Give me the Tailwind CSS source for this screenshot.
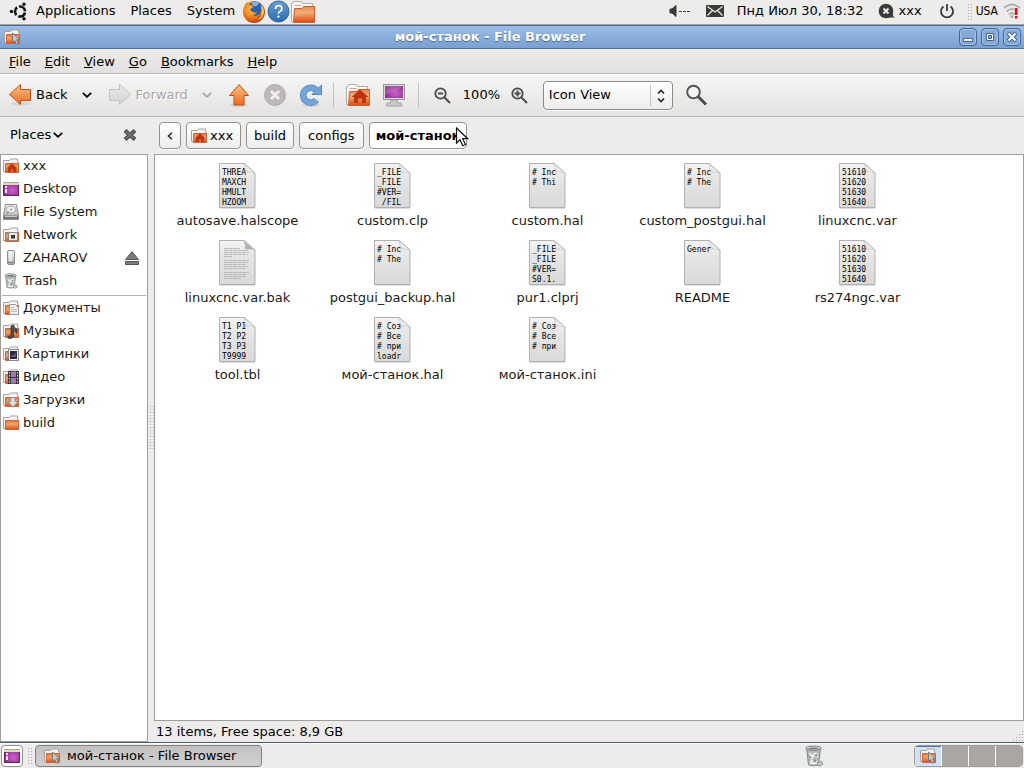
<!DOCTYPE html>
<html lang="en">
<head>
<meta charset="UTF-8">
<meta name="viewport" content="width=device-width, initial-scale=1.0">
<title>мой-станок - File Browser</title>
<script src="https://cdn.jsdelivr.net/npm/@tailwindcss/browser@4"></script>
</head>
<body class="flex h-screen flex-col overflow-hidden bg-[#edeceb] font-['DejaVu_Sans',sans-serif] text-[13px] leading-4 text-black">

<!-- Shared icon symbols -->
<svg class="absolute h-0 w-0" aria-hidden="true">
    <defs>
        <linearGradient id="g-orange" x1="0" y1="0" x2="0" y2="1"><stop offset="0" stop-color="#dd7a42"/><stop offset=".4" stop-color="#f3a468"/><stop offset="1" stop-color="#dc4a14"/></linearGradient>
        <linearGradient id="g-arrow" x1="0" y1="0" x2="0" y2="1"><stop offset="0" stop-color="#fbc58a"/><stop offset="1" stop-color="#ee6a20"/></linearGradient>
        <linearGradient id="g-arrow-off" x1="0" y1="0" x2="0" y2="1"><stop offset="0" stop-color="#ebebea"/><stop offset="1" stop-color="#d4d3d2"/></linearGradient>
        <linearGradient id="g-paper" x1="0" y1="0" x2="0" y2="1"><stop offset="0" stop-color="#f4f4f4"/><stop offset=".35" stop-color="#e6e6e6"/><stop offset="1" stop-color="#d9d9d9"/></linearGradient>
        <linearGradient id="g-curl" x1="0" y1="1" x2="1" y2="0"><stop offset="0" stop-color="#c4c4c4"/><stop offset=".5" stop-color="#f6f6f6"/><stop offset="1" stop-color="#ffffff"/></linearGradient>
        <linearGradient id="g-metal" x1="0" y1="0" x2="0" y2="1"><stop offset="0" stop-color="#f4f4f4"/><stop offset="1" stop-color="#a9a9a9"/></linearGradient>
        <linearGradient id="g-blue" x1="0" y1="0" x2="0" y2="1"><stop offset="0" stop-color="#6d9fd0"/><stop offset="1" stop-color="#2a6db0"/></linearGradient>
        <radialGradient id="g-purple" cx=".6" cy=".6" r=".8"><stop offset="0" stop-color="#cf5fc9"/><stop offset="1" stop-color="#7d2181"/></radialGradient>
        <radialGradient id="g-fox" cx=".4" cy=".35" r=".7"><stop offset="0" stop-color="#fdc33c"/><stop offset=".6" stop-color="#ee7a1c"/><stop offset="1" stop-color="#b8360d"/></radialGradient>
    </defs>

    <symbol id="folder" viewBox="0 0 16 16">
        <path d="M.5 13.500v-11h6l1-1.500h7v2.500h.5v10z" fill="#f6f5f4" stroke="#a5a29e"/>
        <path d="M2.500 14.500v-9h13v9z" fill="url(#g-orange)" stroke="#cf6236"/>
    </symbol>
    <symbol id="folder-home" viewBox="0 0 16 16">
        <use href="#folder" width="16" height="16"/>
        <path d="M9 5.500l5.500 5H13v3.500h-2.700v-2.500H7.700V14H5v-3.500H3.500z" fill="#bd3412"/>
    </symbol>
    <!-- 24px folders for the panel and the toolbar -->
    <symbol id="folder-large" viewBox="0 0 24 24">
        <path d="M.5 21.500v-18h1l1-2h8l1 2h10v18z" fill="#f8f7f6" stroke="#b1aeaa"/>
        <path d="M3.500 5.500h7" stroke="#e7a27c"/>
        <path d="M2.500 22.500l1-14h7.500l1.500-2h11v16z" fill="url(#g-orange)" stroke="#cf5f2c"/>
        <path d="M12 7h11v6q-9 0-19 5l.5-9h6.500z" fill="#fff" opacity=".12"/>
    </symbol>
    <symbol id="folder-home-large" viewBox="0 0 24 24">
        <use href="#folder-large" width="24" height="24"/>
        <path d="M14 6.500l8.500 7.500h-2.500v6h-4v-4.500h-4V20H8v-6H5.500z" fill="#bd3412"/>
    </symbol>
    <symbol id="folder-cursor" viewBox="0 0 16 16">
        <use href="#folder" width="16" height="16"/>
        <path d="M8.500 4v9.500l2.200-2 1.600 3.800 2-.9-1.600-3.600h3z" fill="#c9c9c9" stroke="#6f6f6f" stroke-width=".9"/>
    </symbol>
    <symbol id="desktop" viewBox="0 0 16 16">
        <rect x=".5" y="1.500" width="15" height="13" fill="url(#g-purple)" stroke="#63215f"/>
        <path d="M0 1h16v3H0z" fill="#dcd9c4"/><path d="M0 1h16v1H0z" fill="#aaa78f"/>
        <path d="M2 5h2v2H2zM2 8h2v4H2z" fill="#f1e5f1"/>
    </symbol>
    <symbol id="drive" viewBox="0 0 16 16">
        <path d="M2.500.5h11l2 11v4H.5v-4z" fill="url(#g-metal)" stroke="#8b8b8b"/>
        <ellipse cx="8" cy="5.500" rx="4.500" ry="3.500" fill="#ededed" stroke="#aaa"/><circle cx="8" cy="5.500" r="1" fill="#999"/>
        <path d="M1 11.500h14v3.500H1z" fill="#777"/><path d="M2 12h12v1H2z" fill="#c9c9c9"/>
        <path d="M3 9l3-2v1.500L4 11z" fill="#999"/>
    </symbol>
    <symbol id="network" viewBox="0 0 16 16">
        <use href="#folder" width="16" height="16"/>
        <path d="M5.500 5.500h9v8h-9z" fill="#eceae6" stroke="#8b8883"/><path d="M8 8h4v3.500H8z" fill="#333"/>
    </symbol>
    <symbol id="usb" viewBox="0 0 16 16">
        <rect x="4.500" y=".5" width="7" height="14" rx="1.500" fill="url(#g-metal)" stroke="#909090"/>
        <path d="M6 2h3v9H6z" fill="#fff" opacity=".6"/><path d="M5 12.500h6" stroke="#858585"/>
    </symbol>
    <symbol id="trash" viewBox="0 0 20 24">
        <path d="M2 4.500l2 17q5.500 2.500 11 0l2-17z" fill="#b4bab7" stroke="#7b817e"/>
        <path d="M5 8l3 3 3-3 4 2-1 4-4-1-3 3-2-2zM6 17l3-1 2 3 3-2v4H6z" fill="#eef0ef"/>
        <path d="M4 10l4 4-3 1zM10 10l2 4 3-4M8 18l3-3 2 4" fill="#7f8582" opacity=".75"/>
        <ellipse cx="9.500" cy="3.500" rx="8.500" ry="2.300" fill="#dfe2e0" stroke="#6e7471"/><ellipse cx="9.500" cy="3.800" rx="5.500" ry="1" fill="#777d7a"/>
        <path d="M14 19l4-1 1.500 3-3 2-3-1z" fill="#ccc" stroke="#808684"/>
    </symbol>
    <symbol id="documents" viewBox="0 0 16 16">
        <use href="#folder" width="16" height="16"/>
        <path d="M6.500 4.500h6l3 3v7h-9z" fill="#f0f0ef" stroke="#999"/><path d="M8 7.500h3M8 9.500h6M8 11.500h6" stroke="#bbb"/>
    </symbol>
    <symbol id="music" viewBox="0 0 16 16">
        <use href="#folder" width="16" height="16"/>
        <path d="M8 13V3l2.500-1q.5 3 3.500 4.500.5 2-.5 4Q13 8 10.500 7.500V13q-.5 2.500-3.500 2.500-2 0-2-1.500t3-1z" fill="#555" stroke="#222" stroke-width=".7"/>
    </symbol>
    <symbol id="pictures" viewBox="0 0 16 16">
        <use href="#folder" width="16" height="16"/>
        <path d="M5.500 3.500h10v11h-10z" fill="#f5f5f5" stroke="#888"/><path d="M7 5h7v8H7z" fill="#30243b"/><path d="M8 10l5-3v4H8z" fill="#68507c"/>
    </symbol>
    <symbol id="video" viewBox="0 0 16 16">
        <use href="#folder" width="16" height="16"/>
        <path d="M5 2h11v13H5z" fill="#3c3840"/><path d="M8 2.500h5v5.500H8zM8 9h5v5.500H8z" fill="#a078b4"/>
        <path d="M6.500 3v12M14.500 3v12" stroke="#e4e0e6" stroke-dasharray="1.500 1.500"/>
    </symbol>
    <symbol id="downloads" viewBox="0 0 16 16">
        <use href="#folder" width="16" height="16"/>
        <path d="M7.500 5.500h5v4h3L10 15.300 4.500 9.500h3z" fill="#d8d8d8" stroke="#8a8a8a"/>
    </symbol>
    <symbol id="chevron" viewBox="0 0 10 6">
        <path d="M.8.800L5 4.800 9.200.8" fill="none" stroke="currentColor" stroke-width="1.800"/>
    </symbol>
</svg>

<!-- Top panel -->
<header class="flex h-[25px] shrink-0 items-center border-b border-[#a5a39c] pr-[3px] pb-0.5 pl-[9px]">
    <svg class="h-5 w-5" viewBox="0 0 20 20" aria-hidden="true">
        <circle cx="11" cy="10.500" r="5" fill="none" stroke="#111" stroke-width="2.600" stroke-dasharray="8.470 2" stroke-dashoffset="-1"/>
        <circle cx="2.500" cy="10.500" r="1.700" fill="#111"/><circle cx="15" cy="3.300" r="1.700" fill="#111"/><circle cx="15" cy="17.700" r="1.700" fill="#111"/>
    </svg>
    <nav class="ml-[7px] flex gap-[15px]">
        <a href="#">Applications</a>
        <a href="#">Places</a>
        <a href="#">System</a>
    </nav>
    <div class="ml-[7px] flex items-center gap-px pt-px">
        <a href="#" aria-label="Firefox">
            <svg class="h-6 w-6" viewBox="0 0 24 24">
                <circle cx="12" cy="12" r="11" fill="url(#g-fox)"/>
                <circle cx="13" cy="9" r="7.500" fill="#2c60aa"/><path d="M9 3q5-2.500 8 0l-2 3-3 .5z" fill="#7db3e2"/>
                <path d="M2 7q1-4 4-5 0 2 2 3 3 0 3 1.500T8 9q0 2 3 3 2 1 4 0-1 3-4 3 3 2 6-.5Q20 12 19.500 6q3 3 2.500 8-2 8-10 8.500Q4 22 2 15 .5 11 2 7z" fill="url(#g-fox)"/>
                <path d="M19 5q4 4 2.500 9-1.500 5-6.500 7 4-3 4.500-7 .5-4-.5-9z" fill="#fbd34b"/>
            </svg>
        </a>
        <a href="#" aria-label="Help">
            <svg class="h-[23px] w-[23px]" viewBox="0 0 23 23">
                <circle cx="11.500" cy="11.500" r="10.500" fill="url(#g-blue)" stroke="#2e659d"/>
                <path d="M8.500 9q0-3.300 3.200-3.300T14.800 8.700q0 1.600-1.700 2.600t-1.600 2.400" fill="none" stroke="#fff" stroke-width="1.700"/><circle cx="11.500" cy="16.600" r="1.200" fill="#fff"/>
            </svg>
        </a>
        <a href="#" aria-label="Home folder"><svg class="h-6 w-6"><use href="#folder-large"/></svg></a>
    </div>

    <div class="ml-auto flex items-center">
        <svg class="h-4 w-[22px]" viewBox="0 0 22 16" aria-label="Volume"><path d="M1 6h2l4-3.500v11L3 10H1z" fill="#3c3b37" stroke="#3c3b37"/><path d="M10 8.500h11" stroke="#3c3b37" stroke-dasharray="3 1"/></svg>
        <svg class="ml-[15px] h-3 w-[18px]" viewBox="0 0 18 12" aria-label="Mail"><rect width="18" height="12" rx="1" fill="#3c3b37"/><path d="M1.500 1.500L9 7l7.500-5.500M1.500 10.500l5-5M16.500 10.500l-5-5" fill="none" stroke="#edeceb" stroke-width="1.200"/></svg>
        <time class="ml-[13px]">Пнд Июл 30, 18:32</time>
        <svg class="ml-[14px] h-[18px] w-[18px]" viewBox="0 0 18 18" aria-hidden="true"><circle cx="8" cy="9" r="7.300" fill="#3c3b37"/><path d="M10 10h5v4l2 1.500H8z" fill="#3c3b37"/><path d="M5.500 6.500l5 5M10.500 6.500l-5 5" stroke="#edeceb" stroke-width="2"/></svg>
        <span class="ml-[3px]">xxx</span>
        <svg class="ml-[17px] h-4 w-4" viewBox="0 0 16 16" aria-label="Power"><path d="M4.500 3.500a6 6 0 1 0 7 0" fill="none" stroke="#3c3b37" stroke-width="1.800"/><path d="M8 1v7" stroke="#3c3b37" stroke-width="1.800"/></svg>
        <span class="ml-3 h-[17px] w-[5px] bg-[radial-gradient(#aaa8a4_40%,transparent_45%)] bg-[size:3px_3px]"></span>
        <span class="ml-1 font-['DejaVu_Sans_Condensed','DejaVu_Sans',sans-serif] text-xs">USA</span>
        <svg class="ml-[5px] h-4 w-[18px]" viewBox="0 0 18 16" aria-label="Network">
            <g fill="none" stroke="#b4b2af" stroke-width="1.800"><path d="M1 5q8-7 16 0"/><path d="M3.500 8.500q5.500-5 11 0"/><path d="M6 11.500q3-3 6 0"/></g><circle cx="9" cy="13.500" r="1.500" fill="#aaa"/>
            <path d="M12 5h2.500v7H12zM12 13h2.500v2.500H12z" fill="#dd1414"/>
        </svg>
    </div>
</header>

<!-- Window title bar -->
<div class="flex h-6 shrink-0 items-center border-t border-b border-t-[#4a6c97] border-b-[#4b70a3] bg-linear-to-b from-[#9cbde6] to-[#7aa0d0] px-[3px]">
    <svg class="mx-px h-4 w-4" aria-hidden="true"><use href="#folder-cursor"/></svg>
    <h1 class="flex-1 text-center font-bold text-white [text-shadow:0_1px_1px_#46648c]">мой-станок - File Browser</h1>
    <div class="flex gap-1">
        <button aria-label="Minimize" class="flex h-[18px] w-[18px] items-center justify-center rounded border border-[#42658f] bg-[#86a9d7] inset-shadow-[0_0_0_1px_#a5c2e8]"><svg class="h-3 w-3" viewBox="0 0 12 12"><path d="M1.500 7.500h9v3h-9z" fill="#fff" stroke="#42658f"/></svg></button>
        <button aria-label="Maximize" class="flex h-[18px] w-[18px] items-center justify-center rounded border border-[#42658f] bg-[#86a9d7] inset-shadow-[0_0_0_1px_#a5c2e8]"><svg class="h-3 w-3" viewBox="0 0 12 12"><path d="M2.500 2.500h7v7h-7z" fill="#fff" stroke="#42658f"/><path d="M4.500 4.500h3v3h-3z" fill="#7fa3d2" stroke="#42658f"/></svg></button>
        <button aria-label="Close" class="flex h-[18px] w-[18px] items-center justify-center rounded border border-[#42658f] bg-[#86a9d7] inset-shadow-[0_0_0_1px_#a5c2e8]"><svg class="h-3 w-3" viewBox="0 0 12 12"><path d="M2 2l8 8M10 2l-8 8" stroke="#42658f" stroke-width="4"/><path d="M2.500 2.500l7 7M9.500 2.500l-7 7" stroke="#fff" stroke-width="2"/></svg></button>
    </div>
</div>

<!-- Menu bar -->
<nav class="flex h-[25px] shrink-0 items-center gap-3.5 border-b border-[#bfbebc] bg-linear-to-b from-[#edeceb] to-[#e2e1e0] pt-px pl-[9px]">
    <a href="#"><u>F</u>ile</a>
    <a href="#"><u>E</u>dit</a>
    <a href="#"><u>V</u>iew</a>
    <a href="#"><u>G</u>o</a>
    <a href="#"><u>B</u>ookmarks</a>
    <a href="#"><u>H</u>elp</a>
</nav>

<!-- Toolbar -->
<div class="flex h-[43px] shrink-0 items-center border-t border-b border-t-white border-b-[#bcbab8] bg-linear-to-b from-[#f6f6f5] to-[#e3e2e1] pb-px pl-2">
    <button class="flex items-center gap-1">
        <svg class="h-6 w-6" viewBox="0 0 24 24"><ellipse cx="13" cy="20.500" rx="10" ry="2" fill="#000" opacity=".08"/><path d="M1.500 11.500l11-10v5h10v11h-10v4z" fill="url(#g-arrow)" stroke="#c2501c"/></svg>Back
    </button>
    <button aria-label="Back history" class="ml-3.5"><svg class="h-1.5 w-2.5"><use href="#chevron"/></svg></button>
    <button disabled class="ml-4 flex items-center gap-1 text-[#a9a7a5] [text-shadow:1px_1px_0_#fff]">
        <svg class="h-6 w-6" viewBox="0 0 24 24"><path d="M22.500 11.500l-11-10v5h-10v11h10v4z" fill="url(#g-arrow-off)" stroke="#c3c2c0"/></svg>Forward
    </button>
    <button disabled aria-label="Forward history" class="ml-3.5 text-[#a9a7a5]"><svg class="h-1.5 w-2.5"><use href="#chevron"/></svg></button>
    <button aria-label="Up" class="ml-[15px]">
        <svg class="h-6 w-6" viewBox="0 0 24 24"><ellipse cx="12" cy="22" rx="9" ry="2" fill="#000" opacity=".1"/><path d="M12 1.500l9.500 11h-4.500v9.500H7v-9.500H2.500z" fill="url(#g-arrow)" stroke="#c2501c"/></svg>
    </button>
    <button disabled aria-label="Stop" class="ml-3">
        <svg class="h-6 w-6" viewBox="0 0 24 24"><circle cx="12" cy="12" r="10.500" fill="#bdb9b8" stroke="#b0adab"/><path d="M8 8l8 8M16 8l-8 8" stroke="#f2f1f1" stroke-width="2.800"/></svg>
    </button>
    <button aria-label="Reload" class="ml-3">
        <svg class="h-6 w-6" viewBox="0 0 24 24">
            <ellipse cx="12" cy="22" rx="9" ry="2" fill="#000" opacity=".08"/>
            <path d="M17.500 7.500A7.500 7.500 0 1 0 17.500 17" fill="none" stroke="#5288c2" stroke-width="6.500"/>
            <path d="M22.500 2v9.500h-9.500z" fill="#74a4d8" stroke="#5288c2"/>
            <path d="M17.500 7.500A7.500 7.500 0 1 0 17.500 17" fill="none" stroke="#74a4d8" stroke-width="5"/>
        </svg>
    </button>
    <span class="ml-2.5 h-[25px] w-px bg-[#c4c2c0]"></span>
    <button aria-label="Home" class="ml-3"><svg class="h-6 w-6"><use href="#folder-home-large"/></svg></button>
    <button aria-label="Computer" class="ml-3">
        <svg class="h-6 w-6" viewBox="0 0 24 24"><path d="M9 17h6l1 3h3l1 3H4l1-3h3z" fill="#c9c9c7" stroke="#a3a3a1"/><rect x="1.500" y="1.500" width="21" height="15" fill="#dadad8" stroke="#979795"/><rect x="3" y="3" width="18" height="12" fill="url(#g-purple)"/><path d="M3 3h18q-5 6-18 8z" fill="#fff" opacity=".15"/></svg>
    </button>
    <span class="ml-3 h-[25px] w-px bg-[#c4c2c0]"></span>
    <button aria-label="Zoom out" class="ml-[15px]">
        <svg class="h-[17px] w-[17px]" viewBox="0 0 17 17"><circle cx="6.500" cy="6.500" r="5.200" fill="none" stroke="#4b4b49" stroke-width="1.800"/><path d="M4 6.500h5M10.500 10.500l5.500 5.500" stroke="#4b4b49" stroke-width="2"/></svg>
    </button>
    <button class="mx-3 w-9 text-center">100%</button>
    <button aria-label="Zoom in">
        <svg class="h-[17px] w-[17px]" viewBox="0 0 17 17"><circle cx="6.500" cy="6.500" r="5.200" fill="none" stroke="#4b4b49" stroke-width="1.800"/><path d="M3.500 6.500h6M6.500 3.500v6M10.500 10.500l5.500 5.500" stroke="#4b4b49" stroke-width="2"/></svg>
    </button>
    <div class="relative ml-[15px]">
        <select aria-label="View mode" class="h-[29px] w-[130px] appearance-none rounded border border-[#8c8a87] bg-linear-to-b from-white to-[#eeedec] pl-[5px] shadow-[0_1px_0_#fff]">
            <option>Icon View</option>
            <option>List View</option>
            <option>Compact View</option>
        </select>
        <span class="pointer-events-none absolute inset-y-1 right-[22px] w-px bg-[#c4c2c0]"></span>
        <svg class="pointer-events-none absolute top-2 right-2 h-3.5 w-2" viewBox="0 0 8 14"><path d="M1 4.500L4 1.500l3 3M1 9.500l3 3 3-3" fill="none" stroke="#222" stroke-width="1.600"/></svg>
    </div>
    <button aria-label="Search" class="ml-3">
        <svg class="h-6 w-6" viewBox="0 0 24 24"><circle cx="8.500" cy="9" r="6.300" fill="#f5f5f4" fill-opacity=".6" stroke="#555553" stroke-width="1.900"/><path d="M13 13.500l8 8" stroke="#4b4b49" stroke-width="3"/></svg>
    </button>
</div>

<div class="flex min-h-0 flex-1">
    <!-- Side pane -->
    <aside class="flex w-[148px] shrink-0 flex-col">
        <div class="flex h-[37px] shrink-0 items-center pr-[11px] pb-px pl-2.5">
            <button class="flex items-center gap-0.5">Places<svg class="h-1.5 w-2.5"><use href="#chevron"/></svg></button>
            <button aria-label="Close side pane" class="ml-auto"><svg class="h-3.5 w-3.5" viewBox="0 0 14 14"><path d="M2 2.500l10 9M12 2.500l-10 9" stroke="#50504e" stroke-width="4.200"/><path d="M3 3.500l8 7M11 3.500l-8 7" stroke="#777" stroke-width="1.200"/></svg></button>
        </div>
        <ul id="places" class="flex-1 border border-[#a09e9b] bg-white"></ul>
    </aside>

    <div class="flex w-1.5 shrink-0 flex-col justify-center pt-[11px]">
        <span class="mx-auto mb-4 h-[45px] w-[5px] bg-[radial-gradient(#aaa8a4_40%,transparent_45%)] bg-[size:3px_3px]"></span>
    </div>

    <!-- Path bar, files, status -->
    <main class="flex min-w-0 flex-1 flex-col">
        <nav class="flex h-[37px] shrink-0 items-center gap-[5px] pl-[5px]">
            <button aria-label="Previous" class="flex h-[27px] w-[22px] items-center justify-center rounded border border-[#94928f] bg-linear-to-b from-white to-[#efeeed] shadow-[0_1px_0_#fff]"><svg class="h-2 w-1.5" viewBox="0 0 6 8"><path d="M5 .8L1.500 4 5 7.200" fill="none" stroke="#222" stroke-width="1.500"/></svg></button>
            <button class="flex h-[27px] items-center gap-[3px] rounded border border-[#94928f] bg-linear-to-b from-white to-[#efeeed] pr-[7px] pl-1 shadow-[0_1px_0_#fff]"><svg class="h-4 w-4"><use href="#folder-home"/></svg>xxx</button>
            <button class="h-[27px] rounded border border-[#94928f] bg-linear-to-b from-white to-[#efeeed] px-[7px] shadow-[0_1px_0_#fff]">build</button>
            <button class="h-[27px] rounded border border-[#94928f] bg-linear-to-b from-white to-[#efeeed] px-2 shadow-[0_1px_0_#fff]">configs</button>
            <div class="relative">
                <button class="h-[27px] rounded border border-[#94928f] bg-white px-1.5 font-bold shadow-[0_1px_0_#fff]">мой-станок</button>
                <svg class="pointer-events-none absolute top-[5px] -right-0.5 h-5 w-3.5" viewBox="0 0 14 20"><path d="M1.500 1v15l3.500-3.300 2.800 6 2.700-1.200-2.800-5.800h5z" fill="#fff" stroke="#111" stroke-width="1.200"/></svg>
            </div>
        </nav>
        <ul id="files" class="grid flex-1 auto-rows-[77px] grid-cols-[repeat(auto-fill,155px)] content-start border border-[#a09e9b] bg-white pt-2 pl-[5px]"></ul>
        <footer class="flex h-[21px] shrink-0 items-center justify-between pl-0.5">
            <span>13 items, Free space: 8,9 GB</span>
            <svg class="h-3 w-3 self-end" viewBox="0 0 12 12" aria-hidden="true"><path d="M1 10.500h11M4 7.500h8M7 4.500h5M10 1.500h2" stroke="#a5a3a0" stroke-dasharray="1 2"/></svg>
        </footer>
    </main>
</div>

<!-- Bottom panel -->
<footer class="flex h-[26px] shrink-0 items-center border-t border-[#45597a] px-px inset-shadow-[0_1px_0_#fff]">
    <button aria-label="Show desktop" class="flex h-[22px] w-[22px] items-center justify-center rounded border border-[#94928f] bg-white"><svg class="h-4 w-4"><use href="#desktop"/></svg></button>
    <span class="ml-1 h-[17px] w-[5px] bg-[radial-gradient(#aaa8a4_40%,transparent_45%)] bg-[size:3px_3px]"></span>
    <button class="ml-[3px] flex h-[22px] w-[227px] items-center gap-[7px] rounded border border-[#83807d] bg-linear-to-b from-[#c3c1bf] to-[#d3d1cf] pl-2"><svg class="h-4 w-4"><use href="#folder-cursor"/></svg>мой-станок - File Browser</button>
    <a href="#" aria-label="Trash" class="ml-auto"><svg class="h-[22px] w-5"><use href="#trash"/></svg></a>
    <div class="ml-[90px] flex h-[22px] w-[109px] gap-px overflow-hidden rounded border border-[#a09c99] bg-white">
        <button aria-label="Workspace 1" class="flex flex-1 items-center justify-center border-t border-[#4b70a3] bg-[#cfe1f8]"><svg class="h-4 w-4"><use href="#folder-cursor"/></svg></button>
        <button aria-label="Workspace 2" class="flex-1 bg-[#aaa6a3]"></button>
        <button aria-label="Workspace 3" class="flex-1 bg-[#aaa6a3]"></button>
        <button aria-label="Workspace 4" class="flex-1 bg-[#aaa6a3]"></button>
    </div>
</footer>

<script>
// --- Data ---
const PLACES = [
    { icon: 'folder-home', label: 'xxx' },
    { icon: 'desktop', label: 'Desktop' },
    { icon: 'drive', label: 'File System' },
    { icon: 'network', label: 'Network' },
    { icon: 'usb', label: 'ZAHAROV', ejectable: true },
    { icon: 'trash', label: 'Trash' },
    null, // separator
    { icon: 'documents', label: 'Документы' },
    { icon: 'music', label: 'Музыка' },
    { icon: 'pictures', label: 'Картинки' },
    { icon: 'video', label: 'Видео' },
    { icon: 'downloads', label: 'Загрузки' },
    { icon: 'folder', label: 'build' },
];

const FILES = [
    { name: 'autosave.halscope', preview: 'THREA\nMAXCH\nHMULT\nHZOOM' },
    { name: 'custom.clp', preview: '_FILE\n_FILE\n#VER=\n /FIL' },
    { name: 'custom.hal', preview: '# Inc\n# Thi' },
    { name: 'custom_postgui.hal', preview: '# Inc\n# The' },
    { name: 'linuxcnc.var', preview: '51610\n51620\n51630\n51640' },
    { name: 'linuxcnc.var.bak', preview: null },
    { name: 'postgui_backup.hal', preview: '# Inc\n# The' },
    { name: 'pur1.clprj', preview: '_FILE\n_FILE\n#VER=\nS0.1.' },
    { name: 'README', preview: 'Gener' },
    { name: 'rs274ngc.var', preview: '51610\n51620\n51630\n51640' },
    { name: 'tool.tbl', preview: 'T1 P1\nT2 P2\nT3 P3\nT9999' },
    { name: 'мой-станок.hal', preview: '# Соз\n# Все\n# при\nloadr' },
    { name: 'мой-станок.ini', preview: '# Соз\n# Все\n# при' },
];

// --- Rendering ---
function placeRow(place) {
    if (!place) return '<li class="mx-px my-px h-0.5 border-b border-[#b5b3b0]"></li>';
    return `
        <li class="flex h-[23px] items-center pr-[7px] pb-0.5 pl-0.5">
            <a href="#" class="flex items-center gap-1 text-[#1a1a1a]"><svg class="h-4 w-4"><use href="#${place.icon}"/></svg>${place.label}</a>
            ${place.ejectable ? `
                <button aria-label="Eject" class="ml-auto"><svg class="h-4 w-4" viewBox="0 0 16 16"><path d="M8 1.500l6.500 8h-13zM1.500 11.500h13v3h-13z" fill="#7c7c7a" stroke="#555"/></svg></button>
            ` : ''}
        </li>`;
}

function fileItem(file) {
    // Files without a text preview get the generic document lines
    const generic = `<path d="M5 8.500h16M5 10.500h24M5 12.500h25M5 14.500h24M5 16.500h8M5 20.500h25M5 22.500h24M5 24.500h22M5 26.500h24M5 28.500h21M5 32.500h25M5 34.500h23M5 36.500h22M5 38.500h17" stroke="#b9b9b9" stroke-dasharray="4 .5"/>`;
    return `
        <li class="flex flex-col items-center">
            <a href="#" class="flex flex-col items-center text-[#1a1a1a]">
                <span class="relative block">
                    <svg class="h-[46px] w-[37px]" viewBox="0 0 37 46">
                        <path d="M1 45.500h35" stroke="#000" opacity=".12"/>
                        <path d="M.5.500h25l10.500 9.500v34.500H.5z" fill="url(#g-paper)" stroke="#b0b0b0"/>
                        ${file.preview ? '' : generic}
                        <path d="M24.500.800q2.500 4 1.500 8.500 5-1 9.500.8z" fill="${file.preview ? 'url(#g-curl)' : '#b0b0b0'}" stroke="#c4c4c4" stroke-width=".6"/>
                    </svg>
                    ${file.preview ? `<pre class="absolute top-[5px] left-[3px] h-[39px] w-6 overflow-hidden font-['DejaVu_Sans_Mono',monospace] text-[8px] leading-[10px] text-black">${file.preview}</pre>` : ''}
                </span>
                <span class="mt-1">${file.name}</span>
            </a>
        </li>`;
}

document.getElementById('places').innerHTML = PLACES.map(placeRow).join('');
document.getElementById('files').innerHTML = FILES.map(fileItem).join('');
</script>
</body>
</html>
